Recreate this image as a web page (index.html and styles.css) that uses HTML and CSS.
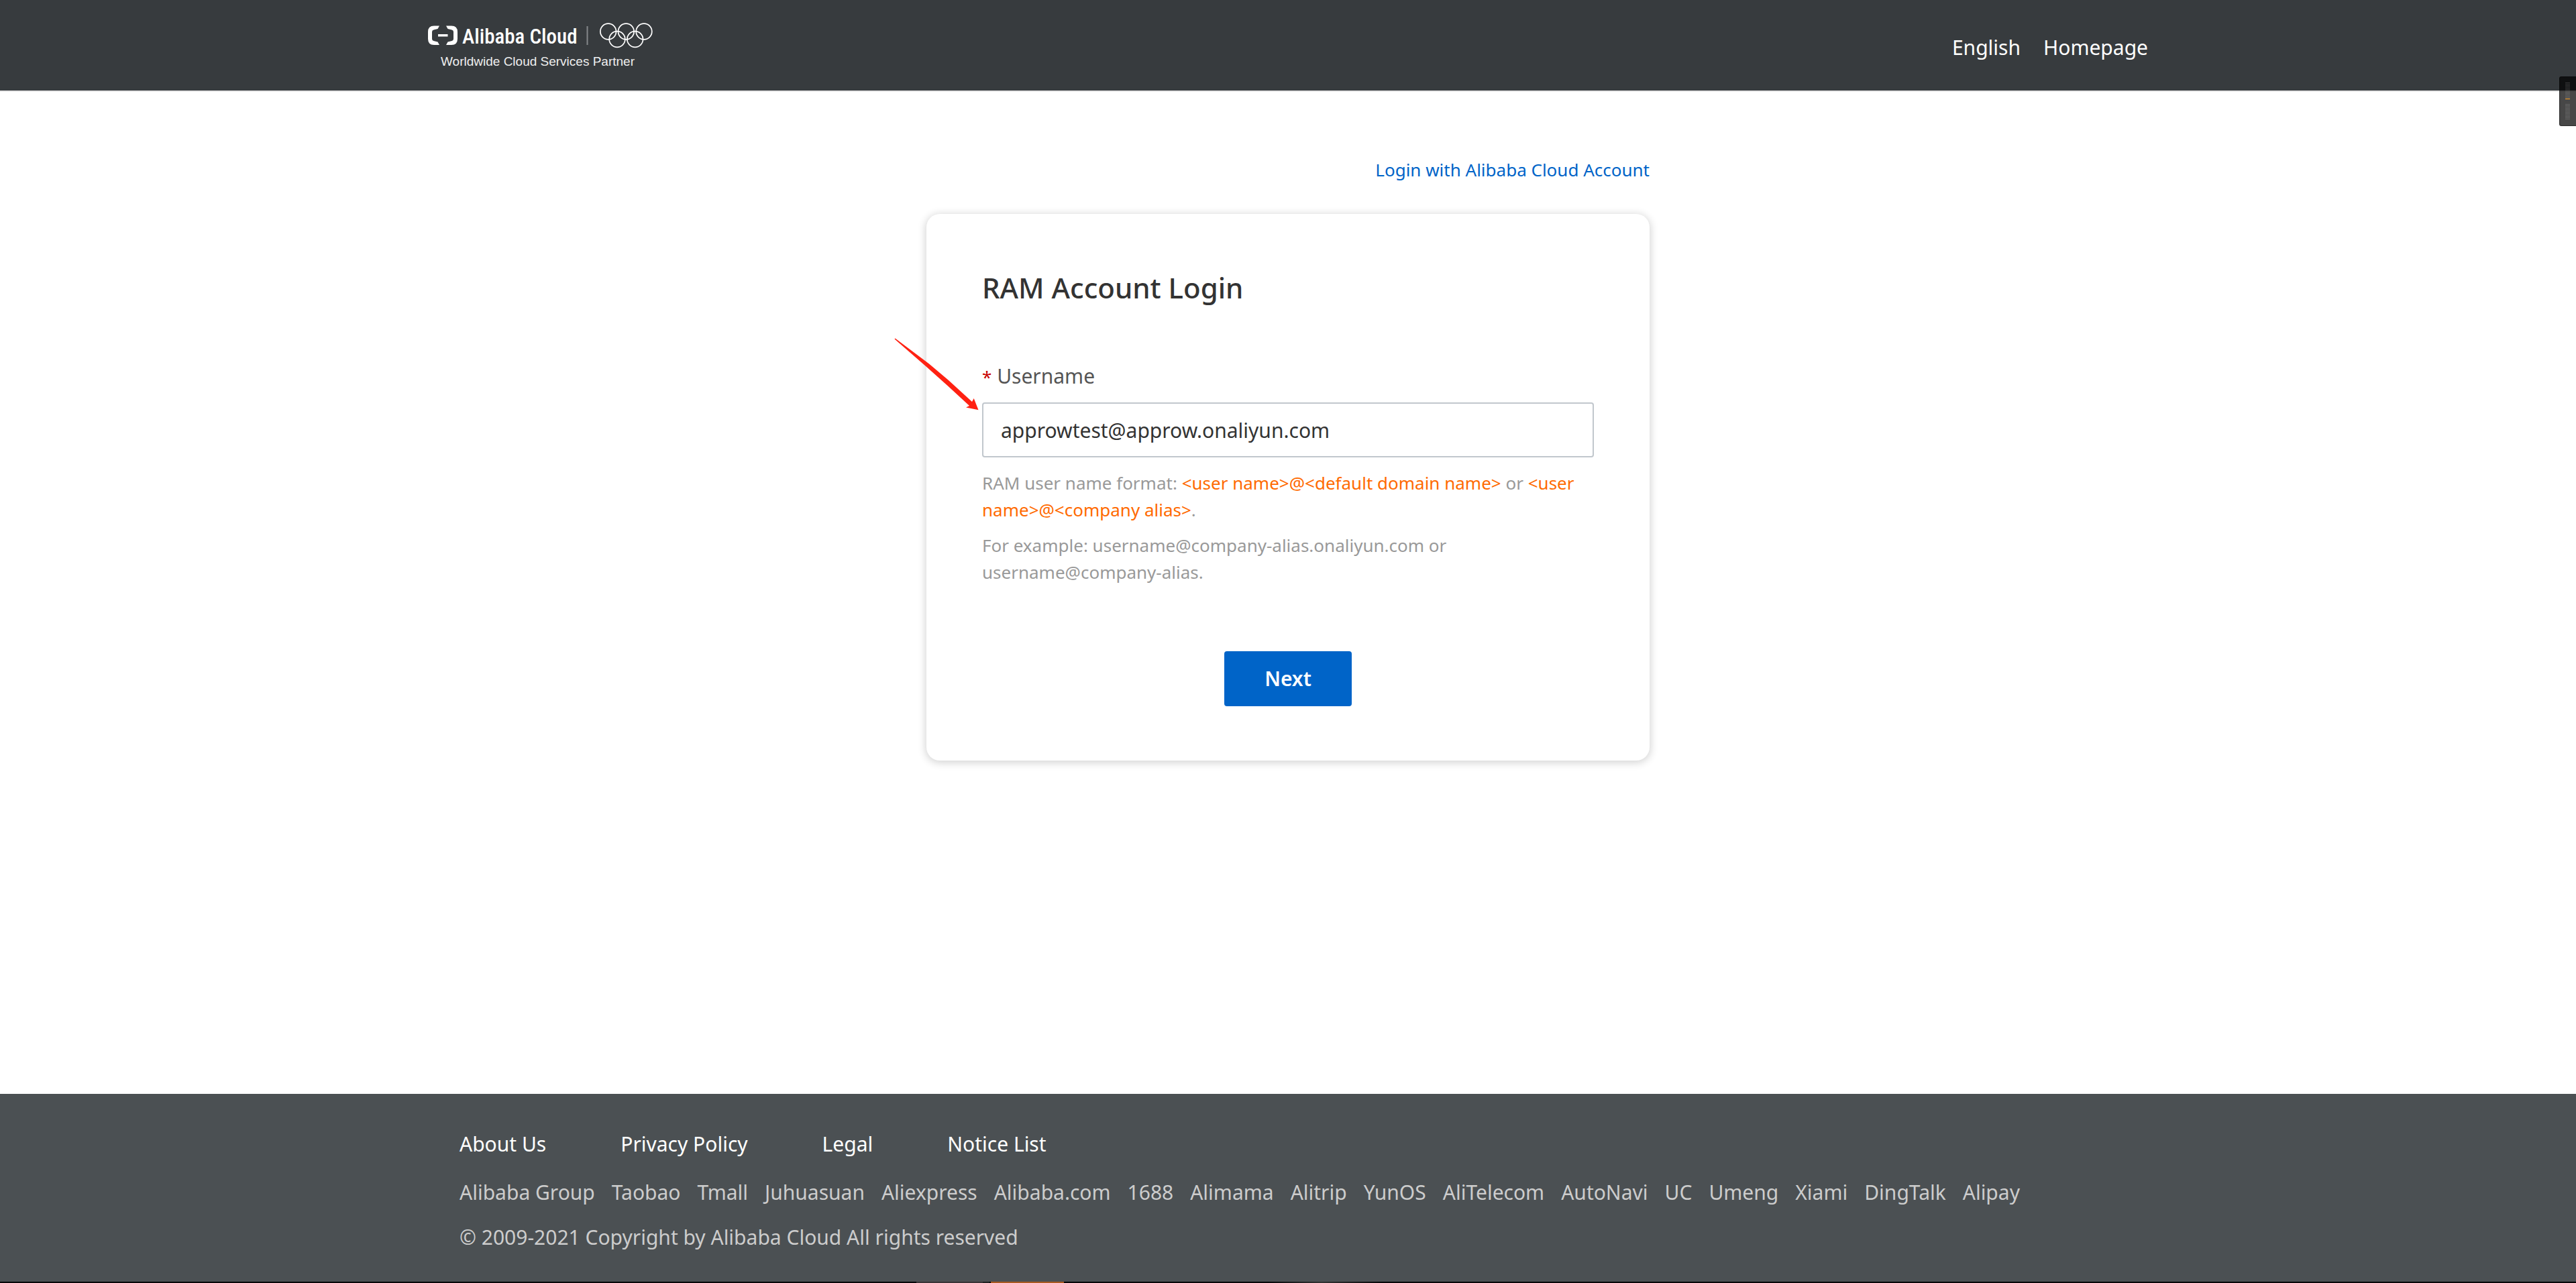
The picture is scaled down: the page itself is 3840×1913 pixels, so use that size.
FILE: index.html
```html
<!DOCTYPE html>
<html lang="en">
<head>
<meta charset="utf-8">
<title>RAM Account Login</title>
<link rel="stylesheet" href="styles.css">
</head>
<body>
<header class="header">
  <div class="header-inner">
    <a class="logo" href="#" aria-label="Alibaba Cloud">
      <svg width="336" height="70" viewBox="0 0 336 70">
        <g fill="#fff">
          <path d="M17 5.500H9Q0 5.500 0 14.500V25Q0 34 9 34H17L14.500 29.500L8.500 28Q6 27.300 6 25V14.500Q6 12.200 8.500 11.500L14.500 10Z"/>
          <path d="M27 5.500H35Q44 5.500 44 14.500V25Q44 34 35 34H27L29.500 29.500L35.500 28Q38 27.300 38 25V14.500Q38 12.200 35.500 11.500L29.500 10Z"/>
          <path d="M15 18H29.500V21.500H15Z"/>
        </g>
        <text class="logo-name" x="51" y="32">Alibaba Cloud</text>
        <path d="M237.500 6V34" stroke="#85888a" stroke-width="2"/>
        <g fill="none" stroke="#fff" stroke-width="1.700">
          <circle cx="268.700" cy="14" r="11.800"/>
          <circle cx="295.300" cy="14" r="11.800"/>
          <circle cx="322" cy="14" r="11.800"/>
          <circle cx="282" cy="25.500" r="11.800"/>
          <circle cx="308.700" cy="25.500" r="11.800"/>
        </g>
        <text class="logo-tag" x="19" y="65">Worldwide Cloud Services Partner</text>
      </svg>
    </a>
    <nav class="nav">
      <a href="#">English</a>
      <a href="#">Homepage</a>
    </nav>
  </div>
</header>

<main class="main">
  <a class="switch" href="#">Login with Alibaba Cloud Account</a>
  <form class="card">
    <h1 class="title">RAM Account Login</h1>
    <label class="label" for="username"><span class="required">*</span> Username</label>
    <input class="input" id="username" type="text" value="approwtest@approw.onaliyun.com">
    <div class="help">
      <p>RAM user name format: <em>&lt;user name&gt;@&lt;default domain name&gt;</em> or <em>&lt;user name&gt;@&lt;company alias&gt;</em>.</p>
      <p>For example: username@company-alias.onaliyun.com or username@company-alias.</p>
    </div>
    <button class="next" type="button">Next</button>
    <svg class="arrow" width="128" height="110" viewBox="0 0 128 110">
      <path d="M1.500 2.500L2.500 1.500L53 39.500L82 64L117 96L119.700 91L126.500 108.300L108 104.500L113 102L81 72.500L48 43Z" fill="#ff2112"/>
    </svg>
  </form>
</main>

<footer class="footer">
  <div class="footer-inner">
    <ul class="links">
      <li><a href="#">About Us</a></li>
      <li><a href="#">Privacy Policy</a></li>
      <li><a href="#">Legal</a></li>
      <li><a href="#">Notice List</a></li>
    </ul>
    <ul class="sites">
      <li><a href="#">Alibaba Group</a></li>
      <li><a href="#">Taobao</a></li>
      <li><a href="#">Tmall</a></li>
      <li><a href="#">Juhuasuan</a></li>
      <li><a href="#">Aliexpress</a></li>
      <li><a href="#">Alibaba.com</a></li>
      <li><a href="#">1688</a></li>
      <li><a href="#">Alimama</a></li>
      <li><a href="#">Alitrip</a></li>
      <li><a href="#">YunOS</a></li>
      <li><a href="#">AliTelecom</a></li>
      <li><a href="#">AutoNavi</a></li>
      <li><a href="#">UC</a></li>
      <li><a href="#">Umeng</a></li>
      <li><a href="#">Xiami</a></li>
      <li><a href="#">DingTalk</a></li>
      <li><a href="#">Alipay</a></li>
    </ul>
    <p class="copyright">© 2009-2021 Copyright by Alibaba Cloud All rights reserved</p>
  </div>
</footer>
<div class="taskbar"></div>

<div class="meter">
  <span class="bars"></span>
  <span class="level"></span>
  <span class="bars"></span>
</div>
</body>
</html>
```
FILE: styles.css
```css
* {
  box-sizing: border-box;
}

body {
  margin: 0;
  min-height: 100vh;
  display: flex;
  flex-direction: column;
  background: #fff;
  font-family: "Noto Sans", "Open Sans", sans-serif;
  font-size: 30px;
  line-height: 40px;
}

a {
  color: inherit;
  text-decoration: none;
}

p,
ul {
  margin: 0;
  padding: 0;
  list-style: none;
}

.header {
  background: #373b3e;
  border-bottom: 2px solid #e8e9e9;
}

.header-inner {
  max-width: 2564px;
  height: 135px;
  margin: 0 auto;
  display: flex;
  justify-content: space-between;
  align-items: center;
}

.logo svg {
  display: block;
}

.logo-name {
  fill: #fff;
  font-family: "Roboto Condensed", Roboto, sans-serif;
  font-size: 31px;
  font-weight: 500;
}

.logo-tag {
  fill: #eee;
  font-family: "Liberation Sans", sans-serif;
  font-size: 19px;
}

.nav {
  display: flex;
  gap: 34px;
  padding-top: 7px;
  color: #fff;
}

.main {
  flex: 1;
  width: 100%;
  max-width: 1078px;
  margin: 0 auto;
  padding: 96px 0;
  display: flex;
  flex-direction: column;
}

.switch {
  align-self: flex-end;
  color: #0064c8;
  font-size: 26px;
}

.card {
  position: relative;
  margin-top: 46px;
  padding: 78px 83px 81px;
  border-radius: 20px;
  box-shadow: 0 2px 12px 2px rgba(0, 0, 0, 0.16);
  display: flex;
  flex-direction: column;
}

.title {
  margin: 0;
  color: #333;
  font-size: 42px;
  font-weight: 500;
  line-height: 64px;
}

.label {
  margin-top: 80px;
  color: #555;
}

.required {
  color: #c80000;
  font-size: 26px;
  line-height: 26px;
}

.input {
  height: 82px;
  margin-top: 19px;
  padding: 0 26px;
  border: 2px solid #c1c7cd;
  border-radius: 4px;
  background: #fff;
  color: #333;
  font: inherit;
}

.help {
  display: flex;
  flex-direction: column;
  gap: 13px;
  margin-top: 18px;
  color: #999;
  font-size: 26px;
}

.help em {
  color: #ff6a00;
  font-style: normal;
}

.next {
  align-self: center;
  width: 190px;
  height: 82px;
  margin-top: 98px;
  border: 0;
  border-radius: 4px;
  background: #0064c8;
  color: #fff;
  font: inherit;
  font-weight: 600;
}

.arrow {
  position: absolute;
  top: 184px;
  left: -49px;
}

.footer {
  background: #4b5053;
  color: #ccc;
}

.footer-inner {
  max-width: 2564px;
  margin: 0 auto;
  padding: 55px 47px 46px;
}

.links {
  display: flex;
  gap: 111px;
  color: #fff;
}

.sites {
  display: flex;
  gap: 25px;
  margin-top: 32px;
}

.copyright {
  margin-top: 27px;
}

.taskbar {
  height: 2px;
  background:
    linear-gradient(90deg, transparent 1366px, #3a3436 1366px 1465px, #222 1465px 1475px, transparent 1475px 1477px, #a85a20 1477px 1586px, transparent 1586px 1890px, #333 1970px, transparent 2060px),
    #060608;
}

.meter {
  position: absolute;
  top: 114px;
  right: 0;
  width: 25px;
  height: 74px;
  padding: 8px;
  display: flex;
  flex-direction: column;
  border: 1px solid rgba(0, 0, 0, 0.4);
  border-right: 0;
  border-radius: 3px 0 0 3px;
  background: rgba(0, 0, 0, 0.72);
}

.bars {
  width: 7px;
  height: 24px;
  background: repeating-linear-gradient(rgba(255, 255, 255, 0.16) 0 1px, transparent 1px 2px);
}

.level {
  width: 7px;
  height: 1px;
  margin-bottom: 7px;
  background: #ffa629;
}
```
